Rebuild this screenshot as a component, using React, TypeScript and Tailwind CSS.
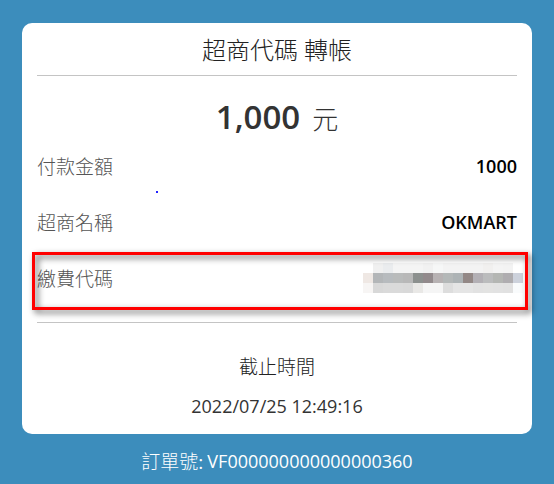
import type { ReactNode } from "react";

const LATIN = "font-['Open_Sans',sans-serif]";
const CJK = "font-['Noto_Sans_CJK_TC',sans-serif]";

const MOSAIC: string[][] = [
  ["#ffffff", "#f0f0f0", "#eaecee", "#f4f4f4", "#f4f4f4", "#f4f4f4", "#f1f1f1", "#f6f7f7", "#f3f3f3", "#f3f3f3", "#f3f3f3", "#f3f3f3", "#f1f0ef", "#f4f4f4", "#f3f3f3", "#ffffff"],
  ["#efe8e4", "#b3b6b8", "#b7bbbe", "#b9bbbb", "#b8b8b8", "#8c908e", "#928a8c", "#b7b2b3", "#b4b8b8", "#adb3b5", "#938886", "#b3b0b5", "#bbbcbd", "#b4b6b3", "#afadb0", "#cdd2dc"],
  ["#f7f5f4", "#d8d8d8", "#dadada", "#dadada", "#d9d9d9", "#e9e8e6", "#f5f5f5", "#f5f5f5", "#dddddd", "#e5e5e5", "#e5e5e5", "#e2e2e2", "#e3e3e2", "#e2e2e2", "#e1e1e1", "#f9fbfc"],
];

function HiddenCode() {
  return (
    <div role="img" aria-label="繳費代碼" className="-mr-[6px] grid w-40 grid-cols-16">
      {MOSAIC.flat().map((color, i) => (
        <span key={i} className="h-[10px]" style={{ backgroundColor: color }} />
      ))}
    </div>
  );
}

function Row({ label, children }: { label: string; children: ReactNode }) {
  return (
    <div className="flex h-14 items-center justify-between">
      <dt className={`${CJK} text-[19px] font-light text-[#555]`}>{label}</dt>
      <dd className={`${LATIN} text-[18px] font-semibold text-black`}>{children}</dd>
    </div>
  );
}

export default function App() {
  return (
    <main className="min-h-screen bg-[#3c8dbc] px-[22px] pt-[23px] text-[#333]">
      <section className="rounded-[10px] bg-white px-[15px] pb-[6px]">
        <h1 className={`${CJK} flex h-[53px] items-center justify-center gap-[6px] border-b border-[#c4c4c4] text-[24px] font-light text-[#222]`}>
          <span>超商代碼</span>
          <span>轉帳</span>
        </h1>
        <div className="flex h-[62px] items-baseline justify-center gap-3 pt-4">
          <strong className={`${LATIN} text-[33px] font-semibold`}>1,000</strong>
          <span className={`${CJK} text-[26px] font-light`}>元</span>
        </div>
        <dl className="relative border-b border-[#c4c4c4] pb-4">
          <Row label="付款金額">1000</Row>
          <Row label="超商名稱">OKMART</Row>
          <Row label="繳費代碼">
            <HiddenCode />
          </Row>
          <span className="absolute top-[53px] left-[119px] size-[2px] bg-[#2222ff]" />
          <div className="pointer-events-none absolute -right-[11px] bottom-3 -left-[5px] h-[58px] border-3 border-[#ff0000] drop-shadow-[3px_3px_3px_rgba(0,0,0,0.65)]" />
        </dl>
        <div className="flex flex-col items-center pt-6">
          <h2 className={`${CJK} flex h-[38px] items-center text-[19px] font-light text-[#222]`}>截止時間</h2>
          <time dateTime="2022-07-25T12:49:16" className={`${LATIN} flex h-[43px] items-center text-[18px]`}>
            2022/07/25 12:49:16
          </time>
        </div>
      </section>
      <footer className="flex h-[50px] items-center justify-center gap-1 pt-1 text-white">
        <span className={`${CJK} text-[19px] leading-7 font-light`}>
          訂單號<span className={`${LATIN} font-normal`}>:</span>
        </span>
        <span className={`${LATIN} text-[18px] leading-7`}>VF000000000000000360</span>
      </footer>
    </main>
  );
}
